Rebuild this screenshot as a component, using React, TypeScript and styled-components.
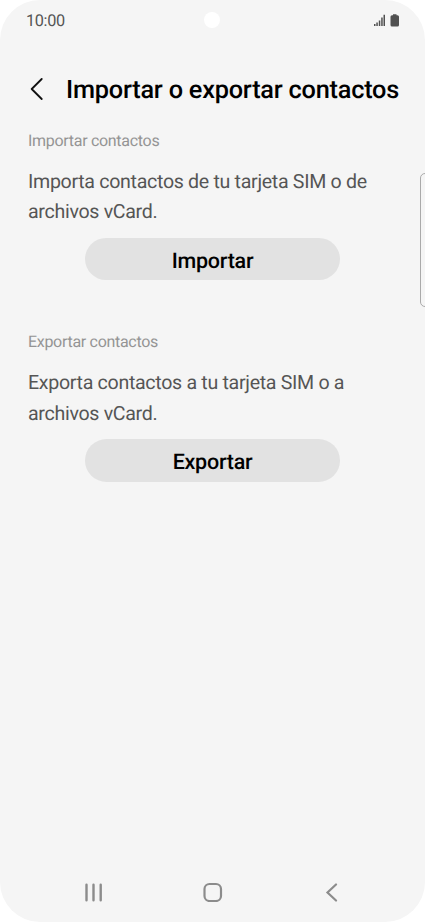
import React from 'react';
import styled, { createGlobalStyle } from 'styled-components';

const GlobalStyle = createGlobalStyle`
  * { box-sizing: border-box; }
  body { margin: 0; background: #fff; font-family: Roboto, sans-serif; text-rendering: geometricPrecision; }
`;

const Screen = styled.main`
  position: relative;
  display: flex;
  flex-direction: column;
  width: 425px;
  height: 922px;
  overflow: hidden;
  border-radius: 40px;
  background: #f5f5f5;
`;

const StatusBar = styled.header`
  display: flex;
  align-items: center;
  justify-content: space-between;
  height: 40px;
  padding: 0 25px 0 26px;
  color: #555;
  font-size: 16.3px;
  letter-spacing: -0.35px;
`;

const StatusIcons = styled.div`
  display: flex;
  align-items: center;
`;

const Camera = styled.span`
  position: absolute;
  top: 12px;
  left: 204px;
  width: 16px;
  height: 16px;
  border-radius: 50%;
  background: #fff;
`;

const EdgeHandle = styled.span`
  position: absolute;
  top: 173px;
  left: 420px;
  width: 12px;
  height: 134px;
  border: 1px solid #aaa;
  border-radius: 5px;
`;

const TitleBar = styled.div`
  display: flex;
  align-items: center;
  height: 30px;
  margin-top: 35px;
  padding-left: 29px;
`;

const BackButton = styled.button`
  display: flex;
  width: 37px;
  padding: 0;
  border: 0;
  background: none;
`;

const Title = styled.h1`
  margin: 0;
  padding-top: 2px;
  color: #000;
  font-size: 25.3px;
  font-weight: 500;
  letter-spacing: -0.22px;
  line-height: 30px;
  white-space: nowrap;
`;

const Section = styled.section`
  display: flex;
  flex-direction: column;
  height: 201.5px;
  padding: 25.6px 28px 0;
`;

const SectionLabel = styled.h2`
  margin: 0 0 16px;
  color: #949494;
  font-size: 16px;
  font-weight: 400;
  letter-spacing: -0.3px;
  line-height: 20px;
`;

const Description = styled.p`
  margin: 0;
  color: #555;
  font-size: 19.6px;
  letter-spacing: -0.31px;
  line-height: 30.8px;
  white-space: pre-line;
`;

const ActionButton = styled.button`
  align-self: center;
  width: 255px;
  height: 42.5px;
  margin-top: 9.6px;
  padding: 5px 0 0;
  border: 0;
  border-radius: 22px;
  background: #e2e2e2;
  color: #000;
  font: 500 21.5px/24px Roboto, sans-serif;
  letter-spacing: -0.25px;
  text-rendering: inherit;
`;

const NavBar = styled.nav`
  display: grid;
  grid-template-columns: repeat(3, 119px);
  justify-content: center;
  justify-items: center;
  align-items: center;
  height: 60px;
  margin-top: auto;
`;

const sections = [
  { label: 'Importar contactos', text: 'Importa contactos de tu tarjeta SIM o de\narchivos vCard.', action: 'Importar' },
  { label: 'Exportar contactos', text: 'Exporta contactos a tu tarjeta SIM o a\narchivos vCard.', action: 'Exportar' },
];

export default function App() {
  return (
    <Screen>
      <GlobalStyle />
      <StatusBar>
        <span>10:00</span>
        <StatusIcons>
          <svg width="28" height="16" fill="#505050">
            <path d="M2 12h1.500v2H2zM4.300 10.500h1.500V14H4.300zM6.800 8.500h1.500V14H6.800zM9.200 5.500h1.500V14H9.200zM11.500 2.800H13V14h-1.500zM21 2.200h3.500v1h1q1.500 0 1.500 1.500V13q0 1.500-1.500 1.500h-5.500q-1.500 0-1.500-1.500V4.700q0-1.500 1.500-1.500h1z" />
          </svg>
        </StatusIcons>
      </StatusBar>
      <Camera />
      <TitleBar>
        <BackButton aria-label="Volver">
          <svg width="16" height="24" fill="none" stroke="#111" strokeWidth="1.8" strokeLinecap="round" strokeLinejoin="round"><path d="M12.700 1L2.700 11L12.700 21" /></svg>
        </BackButton>
        <Title>Importar o exportar contactos</Title>
      </TitleBar>
      {sections.map((s) => (
        <Section key={s.label}>
          <SectionLabel>{s.label}</SectionLabel>
          <Description>{s.text}</Description>
          <ActionButton>{s.action}</ActionButton>
        </Section>
      ))}
      <EdgeHandle />
      <NavBar>
        <svg width="20" height="20" stroke="#8c8c8c" strokeWidth="2.400" strokeLinecap="round"><path d="M2.500 2.800v15.500M9.500 2.800v15.500M16.700 2.800v15.500" /></svg>
        <svg width="20" height="20" fill="none" stroke="#8c8c8c" strokeWidth="2.200"><rect x="1.500" y="2" width="16.500" height="17" rx="5" /></svg>
        <svg width="20" height="20" fill="none" stroke="#8c8c8c" strokeWidth="2.200" strokeLinecap="round"><path d="M14 2.500L5.500 10.500l8.500 8" /></svg>
      </NavBar>
    </Screen>
  );
}
